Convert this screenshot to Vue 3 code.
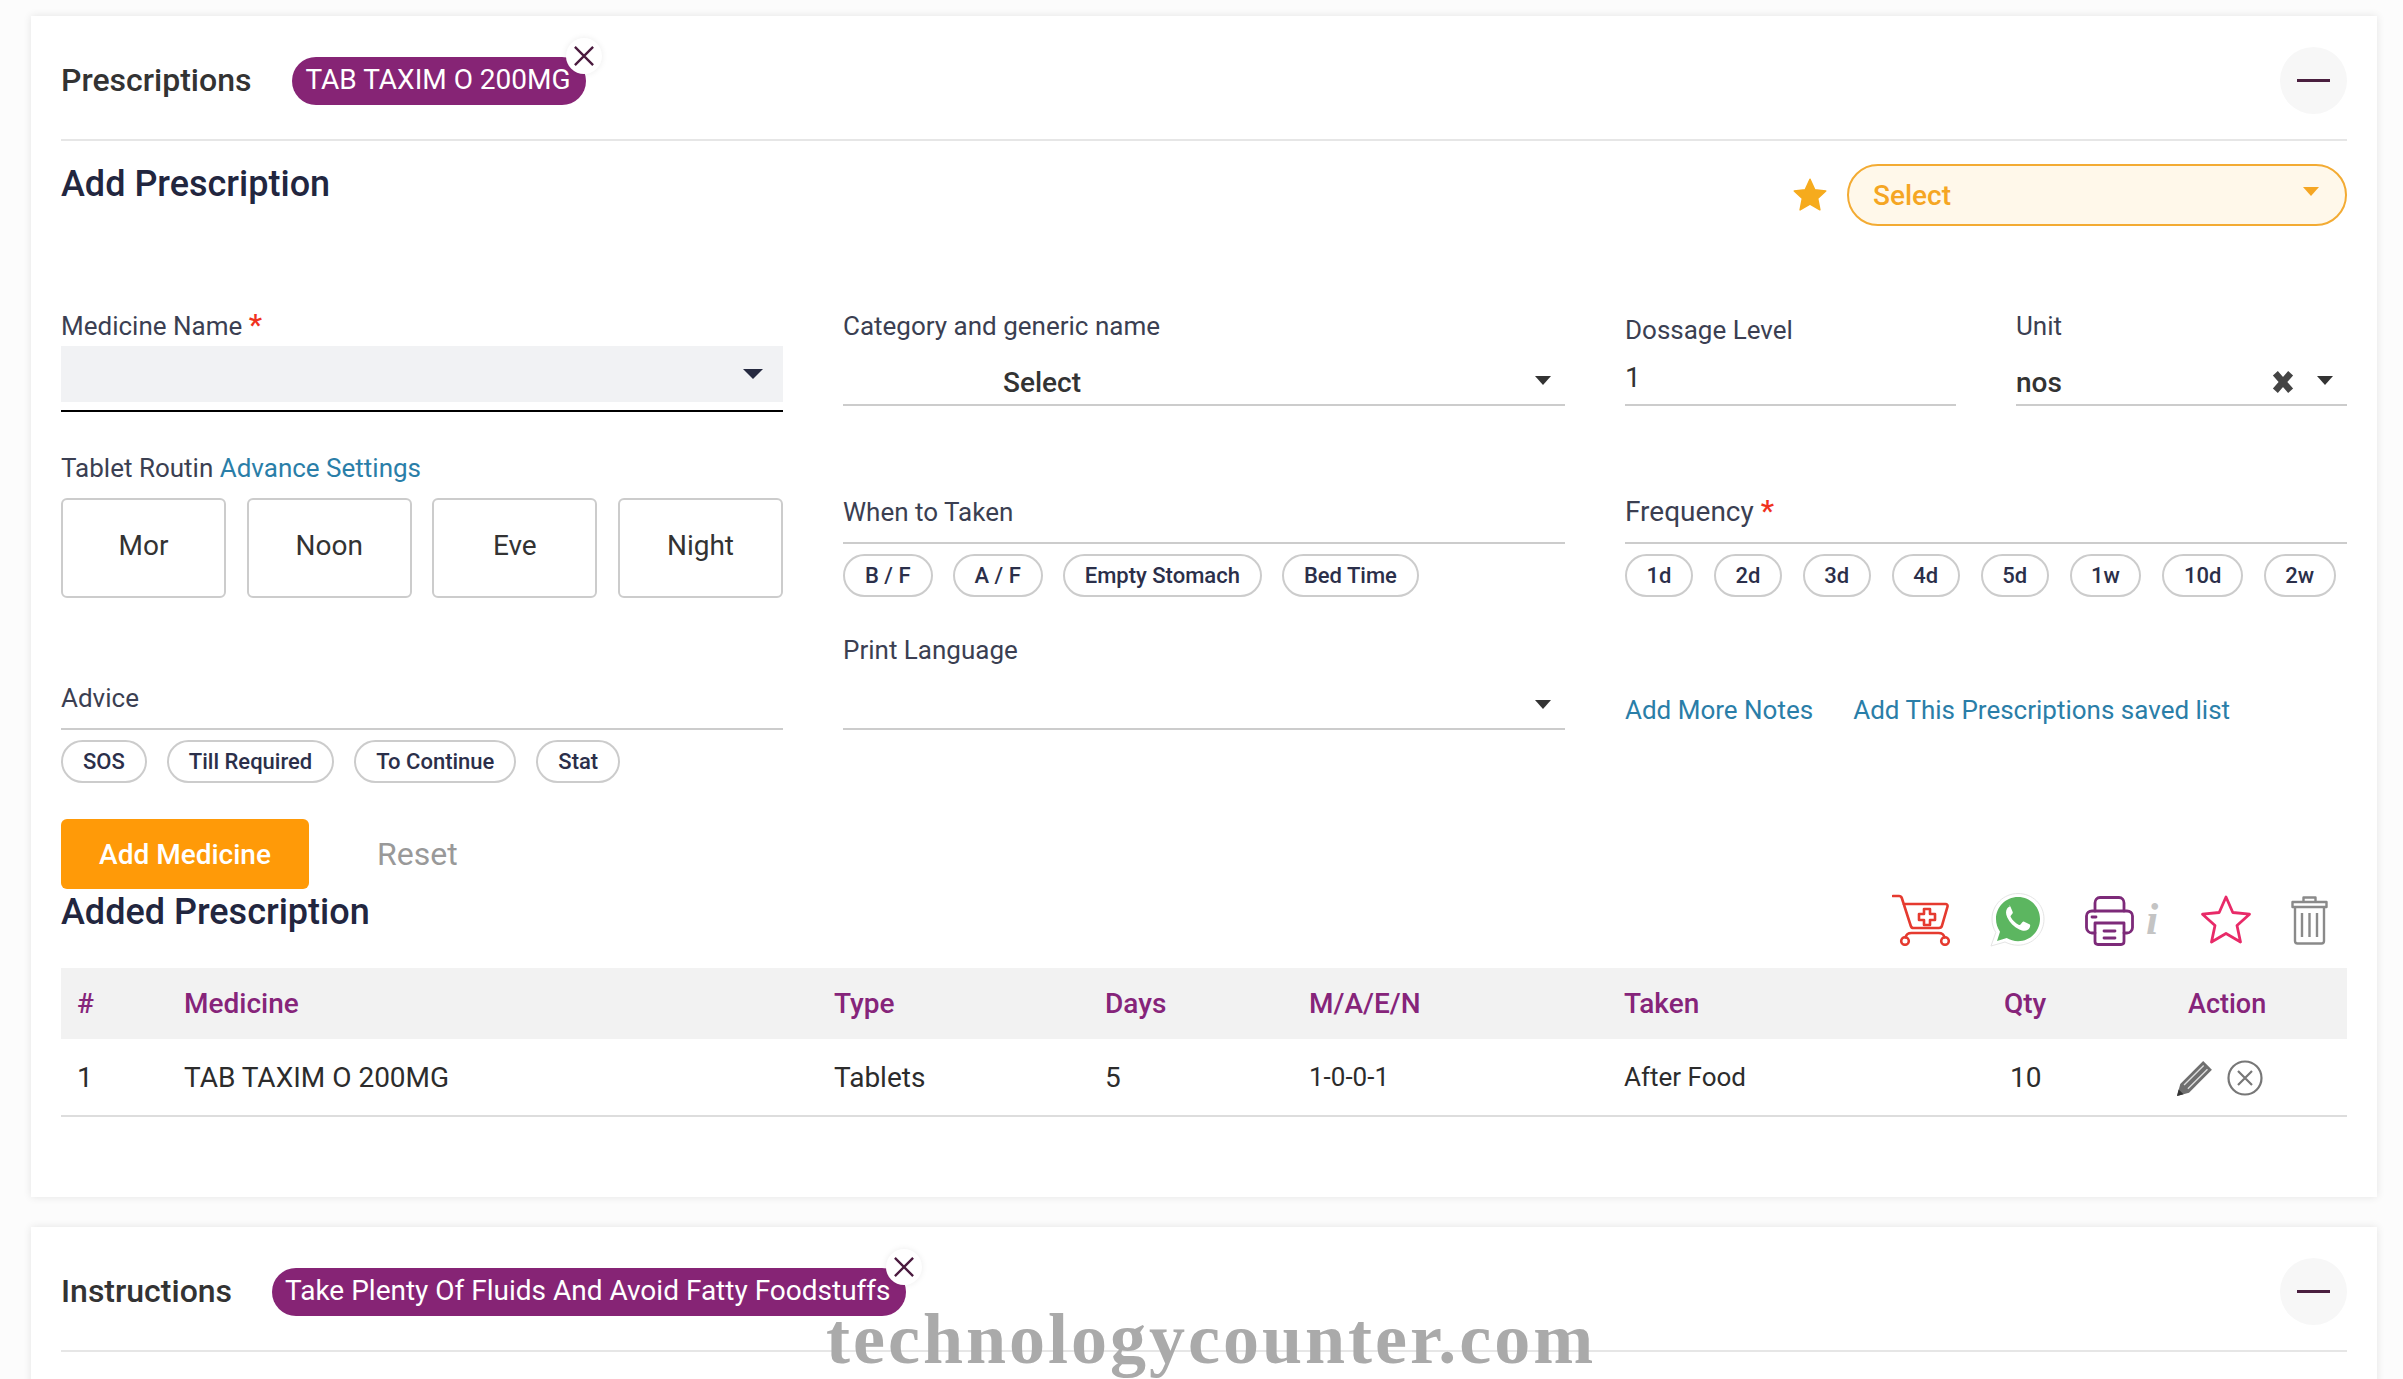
<script setup>
const whenChips = ['B / F', 'A / F', 'Empty Stomach', 'Bed Time']
const freq = ['1d', '2d', '3d', '4d', '5d', '1w', '10d', '2w']
const advice = ['SOS', 'Till Required', 'To Continue', 'Stat']
const routine = ['Mor', 'Noon', 'Eve', 'Night']
</script>

<template>
  <div class="page">
    <section class="card first">
      <header class="head">
        <h2>Prescriptions</h2>
        <span class="tag">TAB TAXIM O 200MG
          <i class="tag-x"><svg viewBox="0 0 20 20"><path d="M3 3 17 17M17 3 3 17" /></svg></i>
        </span>
        <button class="collapse"><span></span></button>
      </header>

      <div class="title-row">
        <h3>Add Prescription</h3>
        <div class="fav">
          <svg class="fav-star" viewBox="0 0 24 24"><path d="M12 1.500l3.200 7 7.300.8-5.400 5 1.500 7.600L12 18l-6.600 3.900 1.500-7.600-5.400-5 7.300-.8z" stroke="#f6ab1d" stroke-linejoin="round" /></svg>
          <div class="pill-select"><span>Select</span><b class="caret amber"></b></div>
        </div>
      </div>

      <div class="form">
        <div class="col">
          <label class="lb">Medicine Name <em>*</em></label>
          <div class="med-select"><b class="caret dark"></b></div>
          <p class="lb routine-lb">Tablet Routin <a>Advance Settings</a></p>
          <div class="routine"><button v-for="r in routine" :key="r"><span>{{ r }}</span></button></div>
          <div class="lb lined advice">Advice</div>
          <div class="chips"><span v-for="c in advice" :key="c">{{ c }}</span></div>
        </div>

        <div class="col">
          <div class="cat">
            <label class="lb">Category and generic name</label>
            <div class="cat-val"><span>Select</span><b class="caret grey"></b></div>
          </div>
          <div class="lb lined when">When to Taken</div>
          <div class="chips"><span v-for="c in whenChips" :key="c">{{ c }}</span></div>
          <label class="lb print-lb">Print Language</label>
          <div class="print-val"><b class="caret grey"></b></div>
        </div>

        <div class="col">
          <div class="pair">
            <div class="dose">
              <label class="lb">Dossage Level</label>
              <div class="dose-val">1</div>
            </div>
            <div class="unit">
              <label class="lb">Unit</label>
              <div class="unit-val"><span>nos</span>
                <svg class="unit-x" viewBox="0 0 22 22"><path d="M4 3 18 19M18 3 4 19" /></svg>
                <b class="caret grey"></b>
              </div>
            </div>
          </div>
          <div class="lb lined freq-lb">Frequency <em>*</em></div>
          <div class="chips freq"><span v-for="c in freq" :key="c">{{ c }}</span></div>
          <div class="links"><a>Add More Notes</a><a>Add This Prescriptions saved list</a></div>
        </div>
      </div>

      <div class="actions">
        <button class="add">Add Medicine</button>
        <span class="reset">Reset</span>
      </div>

      <div class="added-row">
        <h3>Added Prescription</h3>
        <div class="tools">
          <svg class="t-cart" viewBox="0 0 58 52" fill="none" stroke="#e53a2f" stroke-width="2.600" stroke-linecap="round" stroke-linejoin="round">
            <path d="M1 2h6c1.500 0 2.300.6 2.800 2l9 28c.4 1.200 1.200 2 2.500 2H47c1.600 0 2.600-.8 3-2.300l5.500-19c.4-1.500-.5-2.700-2-2.700H11.500" />
            <path d="M32 15h6v5h5v6h-5v5h-6v-5h-5v-6h5z" />
            <path d="M13.500 43.500c.5-3 3-4.500 6-4.500h27c3 0 5.500 1.500 6 4.500" />
            <circle cx="13" cy="47" r="3.800" /><circle cx="53" cy="47" r="3.800" />
          </svg>
          <svg class="t-wa" viewBox="0 0 55 55">
            <path d="M28 1.500C13.500 1.500 2 13 2 27c0 5 1.400 9.500 3.800 13.500L1 54l14-4c4 2 8.300 3.200 13 3.200C42.500 53.200 54 41.500 54 27S42.500 1.500 28 1.500z" fill="#fff" stroke="#e5e5e5" stroke-width="1" />
            <path d="M28 5C15.800 5 6 14.800 6 27c0 4.700 1.500 9 4 12.700L7 49l9.700-3c3.400 2 7.200 3.200 11.300 3.200 12.200 0 22-10 22-22.200S40.200 5 28 5z" fill="#5cb660" />
            <path d="M20.500 14.500c-1 0-2.600.6-3.500 2.200-1.200 2-1.500 5 .3 8.800 2.500 5 6.500 9.500 12 12 4 1.800 6.500 1.500 8.500.2 1.500-1 2.300-2.600 2.400-4 0-.8-.2-1.200-.8-1.500l-5.200-2.500c-.7-.3-1.200-.2-1.700.4l-2 2.500c-.4.500-.9.600-1.500.3-3.500-1.500-6.500-4.500-8.300-7.800-.3-.6-.2-1 .2-1.500l1.600-2c.4-.5.4-1 .2-1.600l-2.200-5.200c-.3-.7-.7-1.200-1.500-1.200z" fill="#fff" />
          </svg>
          <svg class="t-print" viewBox="0 0 49 50" fill="none" stroke="#7d2a79" stroke-width="2.800" stroke-linecap="round" stroke-linejoin="round">
            <path d="M10 15V7c0-3 2-5.500 5-5.500h19c3 0 5 2.500 5 5.500v8" />
            <path d="M10 37H7c-3 0-5.500-2.500-5.500-5.500V20c0-3 2.500-5 5.500-5h35c3 0 5.500 2 5.500 5v11.500c0 3-2.500 5.500-5.500 5.500h-3" />
            <path d="M10 27h29v18.500c0 1.500-1 3-3 3H13c-2 0-3-1.500-3-3z" />
            <path d="M7 21h4M19 35h11M19 42h11" />
          </svg>
          <span class="t-info">i</span>
          <svg class="t-star" viewBox="0 0 52 50" fill="none" stroke="#e82a68" stroke-width="2.800" stroke-linejoin="round">
            <path d="M26 2l6.800 15.500 16.700 1.700L37 30.500 40.500 47 26 38.500 11.500 47 15 30.500 2.500 19.200l16.700-1.700z" />
          </svg>
          <svg class="t-trash" viewBox="0 0 37 50" fill="none" stroke="#8a8a8a" stroke-width="2.400" stroke-linejoin="round">
            <path d="M1.500 7h34v5h-34zM12.500 7V2.500h12V7M4 12v34c0 1.500 1 2.500 2.500 2.500h24c1.500 0 2.500-1 2.500-2.500V12" />
            <path d="M11 18v24M18.500 18v24M26 18v24" />
          </svg>
        </div>
      </div>

      <table class="tbl">
        <thead>
          <tr>
            <th class="c1">#</th><th class="c2">Medicine</th><th class="c3">Type</th><th class="c4">Days</th>
            <th class="c5">M/A/E/N</th><th class="c6">Taken</th><th class="c7">Qty</th><th class="c8">Action</th>
          </tr>
        </thead>
        <tbody>
          <tr>
            <td>1</td><td>TAB TAXIM O 200MG</td><td>Tablets</td><td>5</td><td class="sm">1-0-0-1</td><td class="sm">After Food</td><td class="qty">10</td>
            <td class="acts">
              <svg viewBox="1 2 33 33" class="pencil">
                <path d="M1 35l3-11L25 3l8 8L12 32z" fill="#6f6f6f" />
                <path d="M7 24.500 25 6.500l.9.9-18 18zM10.500 28 28.500 10l.9.9-18 18z" fill="#ddd" />
                <path d="M1 35l1.500-6 4.500 4.500z" fill="#333" />
              </svg>
              <svg viewBox="0 0 36 36" class="xc" fill="none" stroke="#777" stroke-width="2.200">
                <circle cx="18" cy="18" r="16.500" /><path d="M11 11l14 14M25 11 11 25" />
              </svg>
            </td>
          </tr>
        </tbody>
      </table>
    </section>

    <section class="card second">
      <header class="head head2">
        <h2>Instructions</h2>
        <span class="tag">Take Plenty Of Fluids And Avoid Fatty Foodstuffs
          <i class="tag-x"><svg viewBox="0 0 20 20"><path d="M3 3 17 17M17 3 3 17" /></svg></i>
        </span>
        <button class="collapse"><span></span></button>
      </header>
    </section>

    <div class="watermark">technologycounter.com</div>
  </div>
</template>

<style>
html, body { margin: 0; background: #fff; overflow: hidden; }
</style>

<style scoped>
.page {
  position: relative;
  width: 2403px;
  height: 1379px;
  overflow: hidden;
  background: #fcfcfc;
  padding: 16px 26px 0 31px;
  box-sizing: border-box;
  font-family: Roboto, "Liberation Sans", sans-serif;
  color: #3b3f52;
}
.card {
  background: #fff;
  box-shadow: 0 0 8px rgba(0, 0, 0, .1);
  padding: 0 30px;
}
.first { height: 1181px; }
.second { margin-top: 30px; height: 200px; }
.head {
  height: 117px;
  padding-top: 6px;
  border-bottom: 2px solid #e6e6e6;
  display: flex;
  align-items: center;
}
.head h2 { margin: -2px 0 0; font-size: 32px; font-weight: 500; color: #333; }
.tag {
  position: relative;
  margin-left: 41px;
  height: 48px;
  line-height: 46px;
  padding: 0 15px 0 13px;
  background: #862475;
  border-radius: 24px;
  color: #fff;
  font-size: 28px;
  white-space: nowrap;
}
.tag-x {
  position: absolute;
  top: -19px;
  right: -16px;
  width: 36px;
  height: 36px;
  border-radius: 50%;
  background: #fff;
  box-shadow: 0 0 6px rgba(0, 0, 0, .08);
  display: flex;
  align-items: center;
  justify-content: center;
}
.tag-x svg { width: 26px; height: 26px; fill: none; stroke: #4a1a3e; stroke-width: 1.800; }
.collapse {
  margin-left: auto;
  width: 67px;
  height: 67px;
  border: 0;
  border-radius: 50%;
  background: #f7f7f7;
  display: flex;
  align-items: center;
  justify-content: center;
  padding: 0;
}
.collapse span { width: 33px; height: 3px; background: #4a1f3f; display: block; }
.title-row {
  display: flex;
  justify-content: space-between;
  height: 169px;
}
.title-row h3, .added-row h3 { margin: 0; font-size: 36px; font-weight: 500; color: #22263f; line-height: 42px; }
.title-row h3 { padding-top: 22px; }
.fav { display: flex; align-items: flex-start; padding-top: 23px; }
.fav-star { width: 36px; height: 36px; fill: #f6ab1d; margin: 13px 19px 0 0; }
.pill-select {
  width: 500px;
  height: 62px;
  box-sizing: border-box;
  border: 2px solid #f3ab33;
  border-radius: 31px;
  background: #fff8ea;
  display: flex;
  align-items: center;
  justify-content: space-between;
  padding: 0 26px 0 24px;
  color: #f5a623;
  font-size: 28px;
  font-weight: 500;
}
.caret { display: block; width: 0; height: 0; border-left: 8px solid transparent; border-right: 8px solid transparent; }
.caret.amber { border-top: 9px solid #f5a623; margin-top: -8px; }
.caret.dark { border-top: 10px solid #262a40; border-left-width: 10px; border-right-width: 10px; }
.caret.grey { border-top: 9px solid #333; }
.form {
  display: grid;
  grid-template-columns: 722px 722px 1fr;
  column-gap: 60px;
  height: 509px;
}
.col { min-width: 0; }
.lb { display: block; font-size: 26px; line-height: 32px; color: #3b3f52; margin: 0; }
.lb em { color: #f0321e; font-style: normal; font-weight: 500; font-size: 30px; line-height: 20px; }
.lb a, .links a { color: #2a7ea8; }
.med-select {
  margin-top: 4px;
  height: 56px;
  padding-bottom: 8px;
  background: linear-gradient(#f1f2f4, #f1f2f4) no-repeat top / 100% 56px;
  border-bottom: 2px solid #000;
  display: flex;
  align-items: flex-start;
  justify-content: flex-end;
}
.med-select .caret { margin: 23px 20px 0 0; }
.routine-lb { margin-top: 40px; }
.routine { display: flex; justify-content: space-between; margin-top: 14px; }
.routine button {
  width: 165px;
  height: 100px;
  box-sizing: border-box;
  background: #fff;
  border: 2px solid #ccc;
  border-radius: 6px;
  padding: 0 0 6px;
  font: 400 28px Roboto, sans-serif;
  color: #333;
}
.lined { border-bottom: 2px solid #ccc; }
.advice { margin-top: 84px; padding-bottom: 14px; }
.chips { display: flex; gap: 20px; margin-top: 10px; }
.chips span {
  height: 43px;
  box-sizing: border-box;
  line-height: 39px;
  padding: 0 20px;
  border: 2px solid #ccc;
  border-radius: 22px;
  font-size: 22px;
  font-weight: 500;
  color: #2b2f4a;
  white-space: nowrap;
}
.cat-val {
  margin-top: 20px;
  height: 42px;
  border-bottom: 2px solid #ccc;
  display: flex;
  justify-content: space-between;
  align-items: center;
  padding: 0 14px 0 160px;
  font-size: 28px;
  font-weight: 500;
  color: #333;
}
.cat-val span, .unit-val span { padding-bottom: 1px; }
.cat-val .caret, .unit-val .caret { margin-top: -5px; }
.when { margin-top: 90px; padding-bottom: 14px; }
.print-lb { margin-top: 37px; }
.print-val {
  margin-top: 34px;
  height: 28px;
  border-bottom: 2px solid #ccc;
  display: flex;
  justify-content: flex-end;
  padding-right: 14px;
}
.pair { display: grid; grid-template-columns: 331px 331px; column-gap: 60px; }
.dose { padding-top: 4px; }
.dose-val {
  margin-top: 15px;
  height: 43px;
  line-height: 34px;
  border-bottom: 2px solid #ccc;
  font-size: 28px;
  color: #333;
}
.unit-val {
  margin-top: 20px;
  height: 42px;
  border-bottom: 2px solid #ccc;
  display: flex;
  align-items: center;
  font-size: 28px;
  font-weight: 500;
  color: #333;
}
.unit-val span { flex: 1; }
.unit-x { width: 24px; height: 24px; fill: none; stroke: #444; stroke-width: 6; margin: -3px 22px 0 0; }
.unit-val .caret { margin-right: 14px; }
.freq-lb { margin-top: 90px; padding-bottom: 14px; font-size: 28px; }
.freq { gap: 21px; }
.freq span { padding: 0 19.500px; }
.links { display: flex; gap: 40px; margin-top: 97px; font-size: 26px; line-height: 32px; }
.actions { display: flex; align-items: center; height: 70px; }
.add {
  width: 248px;
  height: 70px;
  border: 0;
  border-radius: 6px;
  background: #ff9a08;
  color: #fff;
  font: 500 28px Roboto, sans-serif;
}
.reset { margin-left: 68px; font-size: 32px; color: #999; }
.added-row { display: flex; justify-content: space-between; height: 79px; }
.added-row h3 { padding-top: 2px; }
.tools { display: flex; align-items: flex-start; padding-right: 19px; }
.t-cart { width: 58px; height: 52px; margin-top: 5px; }
.t-wa { width: 55px; height: 55px; margin: 3px 0 0 40px; }
.t-print { width: 49px; height: 50px; margin: 7px 0 0 40px; }
.t-info {
  margin: 9px 0 0 12px;
  width: 14px;
  font: italic 700 44px/44px "Liberation Serif", serif;
  color: #c4c4c4;
}
.t-star { width: 52px; height: 50px; margin: 6px 0 0 40px; }
.t-trash { width: 37px; height: 50px; margin: 6px 0 0 39px; }
.tbl { width: 100%; border-collapse: collapse; table-layout: fixed; }
.tbl th {
  background: #f2f2f2;
  height: 71px;
  text-align: left;
  font-size: 28px;
  font-weight: 500;
  color: #86247a;
  padding: 0;
}
.tbl td {
  height: 76px;
  font-size: 28px;
  color: #2c2c2c;
  border-bottom: 2px solid #ddd;
  padding: 0;
}
.tbl .sm { font-size: 26px; }
.tbl th:first-child, .tbl td:first-child { padding-left: 16px; }
.c1 { width: 107px; }
.c2 { width: 650px; }
.c3 { width: 271px; }
.c4 { width: 204px; }
.c5 { width: 315px; }
.c6 { width: 380px; }
.c7 { width: 184px; }
.tbl .c8 { font-size: 27px; }
.tbl .qty { padding-left: 6px; }
.acts { white-space: nowrap; }
.acts svg { width: 36px; height: 36px; vertical-align: middle; margin-top: 2px; }
.pencil { margin-right: 14px; margin-left: -11px; }
.head2 .tag { margin-left: 40px; }
.watermark {
  position: absolute;
  left: 826px;
  top: 1304px;
  font: 700 72px "Liberation Serif", serif;
  letter-spacing: 3px;
  color: #aaa;
  line-height: 70px;
  white-space: nowrap;
}
</style>
